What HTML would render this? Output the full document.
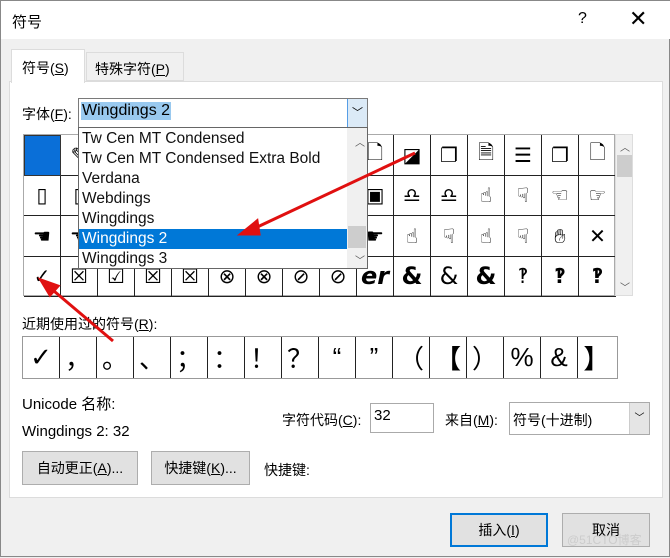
<!DOCTYPE html><html><head><meta charset="utf-8"><style>
*{box-sizing:border-box;margin:0;padding:0}
body{width:670px;height:557px;background:#f0f0f0;font-family:"Liberation Sans","Noto Sans CJK SC",sans-serif;font-size:14px;color:#000;position:relative;overflow:hidden;border:1px solid #888}
.a{position:absolute}
.title{left:0;top:0;width:670px;height:38px;background:#fff}
.panel{left:8px;top:80px;width:654px;height:417px;background:#fff;border:1px solid #dcdcdc}
.grid{left:22px;top:133px;width:592px;height:162px;border:1px solid #aaa;display:grid;grid-template-columns:repeat(16,37px);grid-template-rows:repeat(4,40.5px)}
.grid div,.rec div{border-right:1px solid #222;border-bottom:1px solid #222;display:flex;align-items:center;justify-content:center;font-size:20px;font-family:"DejaVu Sans",sans-serif}
.rec{left:21px;top:335px;width:596px;height:43px;border:1px solid #999;display:grid;grid-template-columns:repeat(16,37px)}
.rec div{border-bottom:none;font-size:26px;font-family:"Liberation Sans","Noto Sans CJK SC",sans-serif}
.btn{background:#e1e1e1;border:1px solid #adadad;display:flex;align-items:center;justify-content:center}
.list div{height:20px;line-height:20px;padding-left:3px;font-size:15.5px;color:#111}
</style></head><body>
<div class="a title"></div>
<div class="a" style="left:11px;top:10px;font-size:15px">符号</div>
<div class="a" style="left:577px;top:9px;font-size:16px">?</div>
<div class="a" style="left:628px;top:5px;font-size:22px;font-weight:300">✕</div>
<div class="a" style="left:10px;top:48px;width:74px;height:34px;background:#fff;border:1px solid #dcdcdc;border-bottom:none;z-index:2;padding:8px 0 0 10px">符号(<u>S</u>)</div>
<div class="a" style="left:85px;top:51px;width:98px;height:29px;background:#f0f0f0;border:1px solid #dcdcdc;padding:6px 0 0 8px">特殊字符(<u>P</u>)</div>
<div class="a panel"></div>
<div class="a" style="left:21px;top:103px">字体(<u>F</u>):</div>
<div class="a grid">
<div style="background:#0a6fd8;border:1px solid #333"></div><div>✎</div><div></div><div></div><div></div><div></div><div></div><div></div><div></div><div>🗋</div><div>◪</div><div>❐</div><div>🗎</div><div>☰</div><div>❐</div><div style="border-right:none">🗋</div>
<div>▯</div><div>▯</div><div></div><div></div><div></div><div></div><div></div><div></div><div></div><div>▣</div><div>♎</div><div>♎</div><div>☝</div><div>☟</div><div>☜</div><div style="border-right:none">☞</div>
<div>☚</div><div>☚</div><div></div><div></div><div></div><div></div><div></div><div></div><div></div><div>☛</div><div>☝</div><div>☟</div><div>☝</div><div>☟</div><div>✋&#xFE0E;</div><div style="border-right:none">✕</div>
<div>✓</div><div>☒</div><div>☑</div><div>☒</div><div>☒</div><div>⊗</div><div>⊗</div><div>⊘</div><div>⊘</div><div style="font-style:italic;font-weight:bold;font-size:24px">er</div><div style="font-weight:bold;font-size:24px">&amp;</div><div style="font-size:24px">&amp;</div><div style="font-weight:bold;font-size:24px">&amp;</div><div>‽</div><div style="font-weight:bold">‽</div><div style="border-right:none;font-weight:bold">‽</div>
</div>
<div class="a" style="left:614px;top:133px;width:18px;height:162px;background:#f0f0f0;border:1px solid #ddd"><div class="a" style="left:1px;top:20px;width:15px;height:22px;background:#cdcdcd"></div><div class="a" style="left:4px;top:4px;font-size:10px;color:#555">︿</div><div class="a" style="left:4px;top:144px;font-size:10px;color:#555">﹀</div></div>
<div class="a" style="left:77px;top:97px;width:290px;height:30px;background:#fff;border:1px solid #7a7a7a"><span class="a" style="left:2px;top:3px;background:#99c9ef;font-size:16px;padding:0 1px">Wingdings 2</span><div class="a" style="right:0;top:0;width:20px;height:28px;background:#dbeaf7;border-left:1px solid #569de5;text-align:center;font-size:11px;line-height:28px">﹀</div></div>
<div class="a list" style="left:77px;top:126px;width:290px;height:142px;background:#fff;border:1px solid #666;padding-top:1px">
<div>Tw Cen MT Condensed</div><div>Tw Cen MT Condensed Extra Bold</div><div>Verdana</div><div>Webdings</div><div>Wingdings</div><div style="background:#0078d7;color:#fff;width:268px">Wingdings 2</div><div>Wingdings 3</div>
<div class="a" style="left:268px;top:0;width:20px;height:140px;background:#f0f0f0"><div class="a" style="left:1px;top:98px;width:18px;height:22px;background:#cdcdcd"></div><div class="a" style="left:5px;top:6px;font-size:10px;color:#555">︿</div><div class="a" style="left:5px;top:124px;font-size:10px;color:#555">﹀</div></div>
</div>
<div class="a" style="left:21px;top:313px">近期使用过的符号(<u>R</u>):</div>
<div class="a rec"><div style="font-family:'DejaVu Sans'">✓</div><div>，</div><div>。</div><div>、</div><div>；</div><div>：</div><div>！</div><div>？</div><div>“</div><div>”</div><div>（</div><div style="font-weight:bold">【</div><div>）</div><div>%</div><div>&amp;</div><div style="font-weight:bold;border-right:none">】</div></div>
<div class="a" style="left:21px;top:392px;font-size:15px">Unicode 名称:</div>
<div class="a" style="left:21px;top:422px;font-size:15px">Wingdings 2: 32</div>
<div class="a" style="left:281px;top:409px">字符代码(<u>C</u>):</div>
<div class="a" style="left:369px;top:402px;width:64px;height:30px;background:#fff;border:1px solid #aaa;padding:3px 0 0 3px;font-size:15px">32</div>
<div class="a" style="left:444px;top:409px">来自(<u>M</u>):</div>
<div class="a" style="left:508px;top:401px;width:141px;height:33px;background:#fff;border:1px solid #aaa;padding:7px 0 0 3px">符号(十进制)<div class="a" style="right:0;top:0;width:20px;height:31px;background:#e5e5e5;border-left:1px solid #ccc;font-size:10px;line-height:31px;text-align:center">﹀</div></div>
<div class="a btn" style="left:21px;top:450px;width:116px;height:34px">自动更正(<u>A</u>)...</div>
<div class="a btn" style="left:150px;top:450px;width:99px;height:34px">快捷键(<u>K</u>)...</div>
<div class="a" style="left:263px;top:459px">快捷键:</div>
<div class="a btn" style="left:449px;top:512px;width:98px;height:34px;border:2px solid #0078d7">插入(<u>I</u>)</div>
<div class="a btn" style="left:561px;top:512px;width:88px;height:34px">取消</div>
<div class="a" style="left:566px;top:530px;font-size:12px;color:#ccc">@51CTO博客</div>
<svg class="a" style="left:0;top:0" width="670" height="557"><g stroke="#e01010" stroke-width="3" fill="#e01010"><line x1="414" y1="152" x2="252" y2="228"/><polygon points="240,233 256,220 258,233"/><line x1="47" y1="285" x2="112" y2="340"/><polygon points="40,279 57,285 49,294"/></g></svg>
</body></html>
